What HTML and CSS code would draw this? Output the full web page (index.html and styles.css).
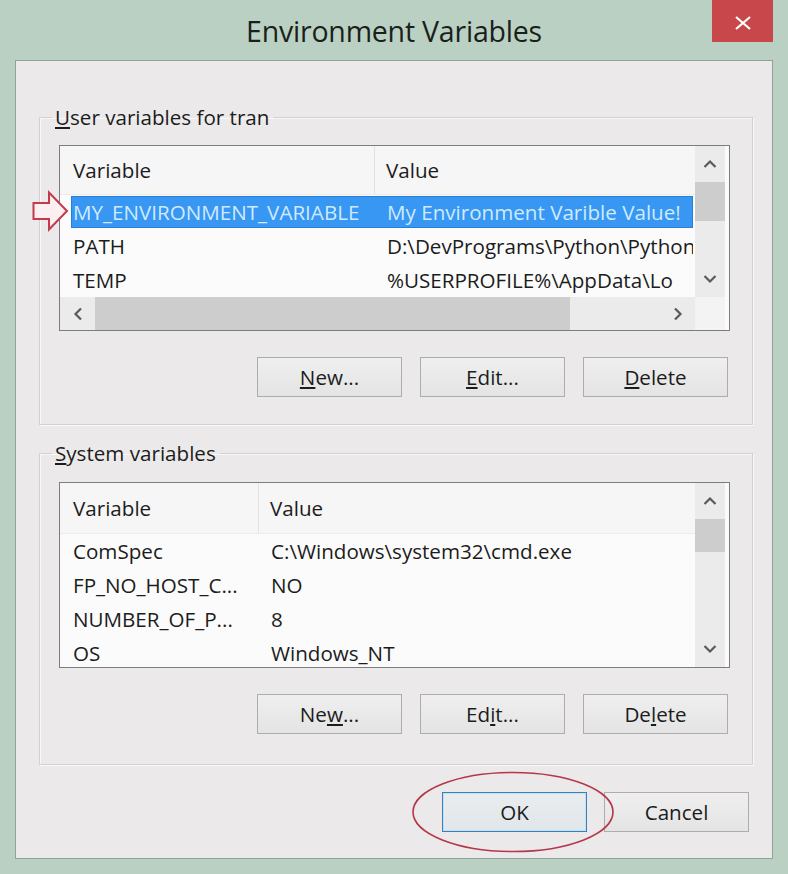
FILE: index.html
```html
<!DOCTYPE html>
<html>
<head>
<meta charset="utf-8">
<title>Environment Variables</title>
<link rel="stylesheet" href="styles.css">
</head>
<body>
<div class="window">
  <div class="titlebar">
    <div class="spacer"></div>
    <div class="title">Environment Variables</div>
    <div class="close-wrap">
      <div class="close">
        <svg width="18" height="14" viewBox="0 0 18 14"><path d="M2 1 L16 13 M16 1 L2 13" stroke="#fff" stroke-width="2.2" fill="none"/></svg>
      </div>
    </div>
  </div>
  <div class="panel">
    <fieldset class="group group-user">
      <legend><u>U</u>ser variables for tran</legend>
      <div class="listview lv-user">
        <div class="lv-content">
          <div class="lv-header hdr-user">
            <div class="hcell c1">Variable</div>
            <div class="hcell c2">Value</div>
          </div>
          <div class="lv-row row-user selected">
            <div class="cell c1">MY_ENVIRONMENT_VARIABLE</div>
            <div class="cell c2">My Environment Varible Value!</div>
          </div>
          <div class="lv-row row-user">
            <div class="cell c1">PATH</div>
            <div class="cell c2">D:\DevPrograms\Python\Python</div>
          </div>
          <div class="lv-row row-user">
            <div class="cell c1">TEMP</div>
            <div class="cell c2">%USERPROFILE%\AppData\Lo</div>
          </div>
        </div>
        <div class="vscroll">
          <div class="sbtn"><svg width="14" height="10" viewBox="0 0 14 10"><path d="M1.5 8 L7 2.5 L12.5 8" stroke="#5a5a5a" stroke-width="2.2" fill="none"/></svg></div>
          <div class="thumb thumb-user"></div>
          <div class="track"></div>
          <div class="sbtn"><svg width="14" height="10" viewBox="0 0 14 10"><path d="M1.5 2 L7 7.5 L12.5 2" stroke="#5a5a5a" stroke-width="2.2" fill="none"/></svg></div>
        </div>
        <div class="hscroll">
          <div class="hbtn"><svg width="10" height="14" viewBox="0 0 10 14"><path d="M8 1.5 L2.5 7 L8 12.5" stroke="#5a5a5a" stroke-width="2.2" fill="none"/></svg></div>
          <div class="hthumb"></div>
          <div class="htrack"></div>
          <div class="hbtn"><svg width="10" height="14" viewBox="0 0 10 14"><path d="M2 1.5 L7.5 7 L2 12.5" stroke="#5a5a5a" stroke-width="2.2" fill="none"/></svg></div>
        </div>
        <div class="corner"></div>
        <svg class="pointer" width="38" height="42" viewBox="0 0 38 42"><path d="M1.5 12 H17 V1.5 L35 20 L17 38.5 V28 H1.5 Z" fill="#fbeff1" stroke="#c23a4c" stroke-width="2" stroke-linejoin="miter"/></svg>
      </div>
      <div class="btn-row">
        <button class="btn"><u>N</u>ew...</button>
        <button class="btn"><u>E</u>dit...</button>
        <button class="btn"><u>D</u>elete</button>
      </div>
    </fieldset>

    <fieldset class="group group-system">
      <legend><u>S</u>ystem variables</legend>
      <div class="listview lv-system">
        <div class="lv-content">
          <div class="lv-header hdr-system">
            <div class="hcell c1">Variable</div>
            <div class="hcell c2">Value</div>
          </div>
          <div class="lv-row row-system">
            <div class="cell c1">ComSpec</div>
            <div class="cell c2">C:\Windows\system32\cmd.exe</div>
          </div>
          <div class="lv-row row-system">
            <div class="cell c1">FP_NO_HOST_C...</div>
            <div class="cell c2">NO</div>
          </div>
          <div class="lv-row row-system">
            <div class="cell c1">NUMBER_OF_P...</div>
            <div class="cell c2">8</div>
          </div>
          <div class="lv-row row-system">
            <div class="cell c1">OS</div>
            <div class="cell c2">Windows_NT</div>
          </div>
        </div>
        <div class="vscroll">
          <div class="sbtn"><svg width="14" height="10" viewBox="0 0 14 10"><path d="M1.5 8 L7 2.5 L12.5 8" stroke="#5a5a5a" stroke-width="2.2" fill="none"/></svg></div>
          <div class="thumb thumb-system"></div>
          <div class="track"></div>
          <div class="sbtn"><svg width="14" height="10" viewBox="0 0 14 10"><path d="M1.5 2 L7 7.5 L12.5 2" stroke="#5a5a5a" stroke-width="2.2" fill="none"/></svg></div>
        </div>
      </div>
      <div class="btn-row">
        <button class="btn">Ne<u>w</u>...</button>
        <button class="btn">Ed<u>i</u>t...</button>
        <button class="btn">De<u>l</u>ete</button>
      </div>
    </fieldset>

    <div class="dialog-buttons">
      <span class="ok-wrap">
        <button class="btn ok">OK</button>
        <svg class="ring" width="204" height="82" viewBox="0 0 204 82"><ellipse cx="102" cy="41" rx="100" ry="39.5" fill="none" stroke="#b3384a" stroke-width="1.6"/></svg>
      </span>
      <button class="btn">Cancel</button>
    </div>
  </div>
</div>
</body>
</html>
```

FILE: styles.css
```css
* { box-sizing: border-box; }

html, body {
  margin: 0;
  padding: 0;
  background: #b8cfc1;
}

body {
  font-family: "Open Sans", "Noto Sans", "Liberation Sans", sans-serif;
  color: #1c1c1c;
}

.window {
  width: 788px;
  height: 874px;
  background: #b9d0c2;
  padding: 0 15px 15px;
  display: flex;
  flex-direction: column;
}

.titlebar {
  height: 60px;
  display: grid;
  grid-template-columns: 1fr auto 1fr;
  align-items: start;
}

.title {
  font-size: 28.5px;
  line-height: 28px;
  padding-top: 17px;
  color: #1b1f1c;
  letter-spacing: -0.2px;
}

.close-wrap {
  display: flex;
  justify-content: flex-end;
}

.close {
  width: 61px;
  height: 42px;
  background: #c8474b;
  display: flex;
  align-items: center;
  justify-content: center;
  padding-top: 4px;
}

.panel {
  flex: 1;
  background: #ebe9ea;
  border: 1px solid #8fa396;
  padding: 0 19px 0 23px;
  display: flex;
  flex-direction: column;
}

.group {
  margin: 0;
  border: 1px solid #d2d0d1;
  box-shadow: inset 1px 1px 0 #f8f8f8, 1px 1px 0 #f8f8f8;
  padding: 16px 22px 27px 19px;
  min-width: 0;
}

.group-user { margin-top: 44px; }
.group-system { margin-top: 16px; padding-top: 17px; padding-bottom: 30px; }

.group legend {
  font-size: 20.6px;
  line-height: 24px;
  padding: 0 4px 0 3px;
  margin-left: -7px;
  color: #1c1c1c;
}

.listview {
  position: relative;
  height: 186px;
  border: 1px solid #7d7d7d;
  background: #fbfbfb;
  padding-right: 4px;
  display: grid;
  grid-template-columns: 1fr 30px;
  grid-template-rows: 1fr 33px;
  overflow: visible;
}

.lv-system {
  grid-template-rows: 1fr;
}

.pointer {
  position: absolute;
  display: block;
  width: 38px;
  height: 42px;
  min-width: 38px;
  left: -28px;
  top: 45px;
  z-index: 3;
  overflow: visible;
}

.lv-content {
  overflow: hidden;
  min-width: 0;
  background: #fbfbfb;
}

.lv-header {
  height: 49px;
  display: grid;
  background: #f6f6f6;
  border-bottom: 1px solid #ececec;
  align-items: center;
  font-size: 20.6px;
}

.hdr-user { grid-template-columns: 315px 1fr; }
.hdr-system { grid-template-columns: 199px 1fr; height: 51px; }

.hcell {
  height: 100%;
  display: flex;
  align-items: center;
  white-space: nowrap;
}

.hcell.c1 {
  padding-left: 13px;
  border-right: 1px solid #e2e2e2;
}

.hcell.c2 { padding-left: 11px; }

.lv-row {
  height: 34px;
  display: grid;
  align-items: center;
  margin-left: 11px;
  margin-right: 2px;
  font-size: 20.6px;
  white-space: nowrap;
}

.row-user { grid-template-columns: 304px 1fr; }
.row-system { grid-template-columns: 188px 1fr; }

.lv-row.selected {
  background: #3797f2;
  color: #cfeaff;
  box-shadow: inset 0 0 0 1px #2a7fd4;
  height: 32px;
  margin-top: 1px;
  margin-bottom: 1px;
}

.cell {
  overflow: hidden;
  padding-left: 2px;
}

.cell.c2 { padding-left: 12px; }

.vscroll {
  background: #ebebeb;
  display: flex;
  flex-direction: column;
}

.sbtn {
  height: 36px;
  display: flex;
  align-items: center;
  justify-content: center;
}

.thumb {
  background: #cdcdcd;
  height: 39px;
}

.thumb-system { height: 33px; }

.track { flex: 1; }

.hscroll {
  background: #ebebeb;
  display: flex;
  min-width: 0;
}

.hbtn {
  width: 35px;
  display: flex;
  align-items: center;
  justify-content: center;
}

.hthumb {
  width: 475px;
  background: #cdcdcd;
}

.htrack { flex: 1; }

.corner { background: #f3f3f3; }

.btn-row {
  display: flex;
  justify-content: flex-end;
  gap: 18px;
  margin-top: 26px;
  padding-right: 2px;
}

.btn {
  width: 145px;
  height: 40px;
  border: 1px solid #adadad;
  background: linear-gradient(#efefef, #e4e4e4);
  font-family: "Open Sans", "Noto Sans", "Liberation Sans", sans-serif;
  font-size: 20.6px;
  color: #1c1c1c;
  padding: 0;
  margin: 0;
}

.dialog-buttons {
  display: flex;
  justify-content: flex-end;
  gap: 17px;
  margin-top: 27px;
  padding-right: 4px;
}

.ok-wrap {
  position: relative;
  display: block;
}

.btn.ok {
  display: block;
  border: 1px solid #3d7fb5;
  box-shadow: inset 0 0 0 1px #bfe3f6;
  background: linear-gradient(#e9edf0, #e1e6ea);
}

.ring {
  position: absolute;
  left: -31px;
  top: -21px;
  pointer-events: none;
}
```
